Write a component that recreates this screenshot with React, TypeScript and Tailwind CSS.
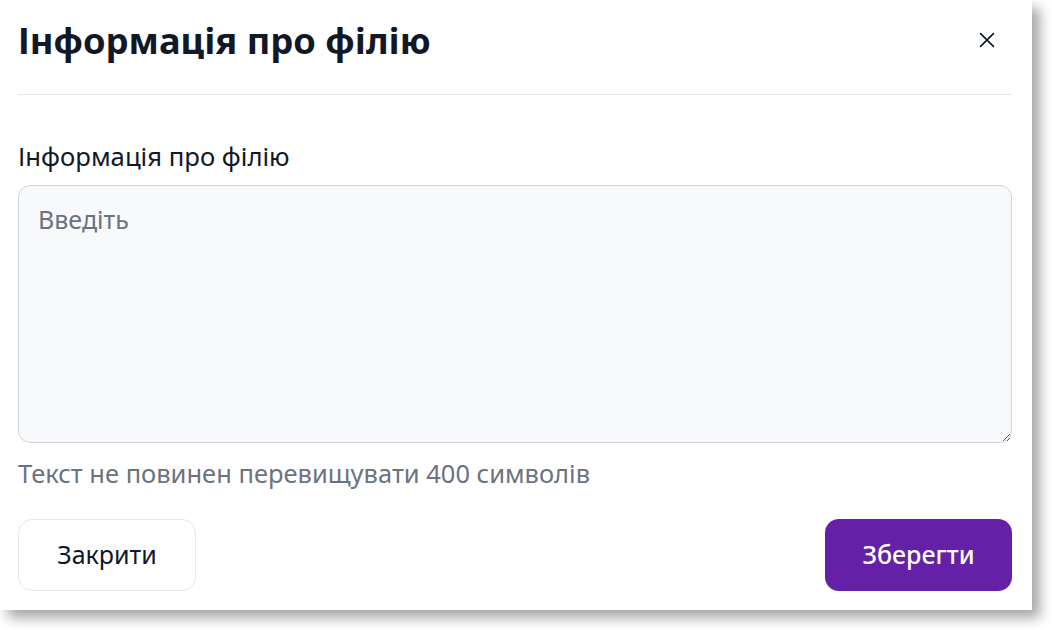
const App = () => {
  return (
    <div className="min-h-[630px] w-[1052px] bg-white font-['Noto_Sans',sans-serif]">
      <div className="flex h-[610px] w-[1032px] flex-col bg-white pl-[18px] pr-[20px] shadow-[8px_8px_12px_rgba(0,0,0,0.35)]">
        <div className="flex h-[95px] items-center justify-between border-b border-[#e5e7eb] pb-[14px]">
          <h2 className="text-[36.3px] leading-[44px] font-bold text-[#111827]">Інформація про філію</h2>
          <button type="button" className="mr-[14px] text-[#111827]">
            <svg
              xmlns="http://www.w3.org/2000/svg"
              className="size-[22px]"
              fill="none"
              viewBox="0 0 24 24"
              stroke="currentColor"
              strokeWidth="1.8"
            >
              <path strokeLinecap="round" d="M5 5l14 14M19 5L5 19" />
            </svg>
          </button>
        </div>

        <label className="mt-[45px] text-[25.7px] leading-[33px] text-[#111827]">Інформація про філію</label>
        <textarea
          placeholder="Введіть"
          className="mt-[12px] h-[258px] w-full resize-y rounded-[12px] border border-[#d1d5db] bg-[#f8f9fb] px-[19px] pt-[17px] pb-[13px] text-[25px] leading-[33px] text-[#111827] outline-none placeholder:text-[#6b7280]"
        />
        <p className="mt-[14px] text-[25.5px] leading-[33px] text-[#6b7280]">Текст не повинен перевищувати 400 символів</p>

        <div className="mt-[29px] flex items-center justify-between">
          <button
            type="button"
            className="h-[72px] w-[178px] rounded-[14px] border border-[#e5e7eb] bg-white text-[25px] text-[#111827]"
          >
            Закрити
          </button>
          <button
            type="button"
            className="h-[72px] w-[187px] rounded-[14px] bg-[#6421a8] text-[25px] font-medium text-white"
          >
            Зберегти
          </button>
        </div>
      </div>
    </div>
  );
};

export default App;
